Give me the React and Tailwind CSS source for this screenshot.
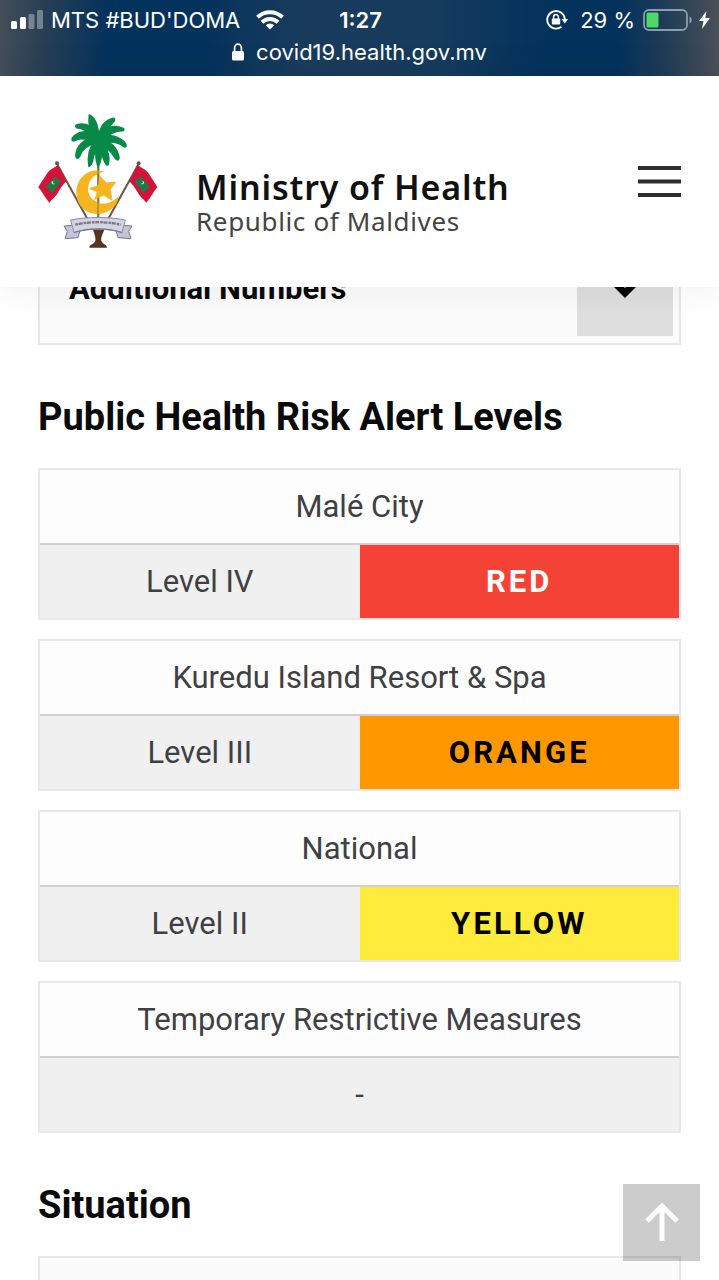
import React from 'react';

const alertLevels = [
  { area: 'Malé City', level: 'Level IV', color: 'RED', badge: 'bg-[#f44336] text-white' },
  { area: 'Kuredu Island Resort & Spa', level: 'Level III', color: 'ORANGE', badge: 'bg-[#ff9800] text-black' },
  { area: 'National', level: 'Level II', color: 'YELLOW', badge: 'bg-[#ffeb3b] text-black' },
  { area: 'Temporary Restrictive Measures', level: '-' },
];

const StatusBar = () => (
  <div className="shrink-0 h-[76px] pt-1 font-['Inter',sans-serif] text-white bg-[linear-gradient(90deg,#434e58_0%,#283f55_6%,#03325c_15%,#03325c_28%,#193c5d_42%,#163b5d_60%,#03325c_76%,#03325c_86%,#1d3b57_92%,#4a5057_100%)]">
    <div className="grid grid-cols-[1fr_auto_1fr] items-center h-8 pl-[11px] pr-[9px] text-[22px] leading-8">
      <div className="flex items-center">
        <svg width="32" height="20" viewBox="0 0 32 20" fill="#fff" aria-hidden="true">
          <rect x="0" y="11" width="6" height="8" rx="1.5" />
          <rect x="9" y="7" width="6" height="12" rx="1.5" />
          <rect x="17.500" y="4" width="6" height="15" rx="1.5" opacity=".35" />
          <rect x="26" y="0" width="6" height="19" rx="1.5" opacity=".35" />
        </svg>
        <span className="ml-2 whitespace-nowrap">MTS #BUD'DOMA</span>
        <svg className="ml-4" width="28" height="20" viewBox="0 0 28 20" fill="none" stroke="#fff" strokeWidth="4" aria-hidden="true">
          <path d="M1.500 7.200a18 18 0 0 1 25 0" />
          <path d="M6 12.200a11.500 11.500 0 0 1 16 0" />
          <path d="M14 19.600l-4.300-4.400a6.200 6.200 0 0 1 8.600 0z" fill="#fff" stroke="none" />
        </svg>
      </div>
      <span className="font-semibold">1:27</span>
      <div className="flex items-center justify-end">
        <svg width="22" height="20" viewBox="0 0 22 20" aria-hidden="true">
          <path d="M15.500 16.700A8.800 8.800 0 1 1 18.800 9" fill="none" stroke="#fff" strokeWidth="1.900" />
          <path d="M15.500 9h6.500l-3.200 4.500z" fill="#fff" />
          <rect x="5.800" y="8.600" width="8.400" height="6" rx="1" fill="#fff" />
          <path d="M7.600 9V7a2.400 2.400 0 0 1 4.800 0v2" fill="none" stroke="#fff" strokeWidth="1.500" />
        </svg>
        <span className="ml-3 whitespace-nowrap">29 %</span>
        <svg className="ml-2" width="50" height="22" viewBox="0 0 50 22" aria-hidden="true">
          <rect x="1" y="1" width="43" height="20" rx="5" fill="none" stroke="#8a9cae" strokeWidth="1.800" />
          <path d="M46.500 7.500c3 1 3 6 0 7z" fill="#8a9cae" />
          <rect x="3.500" y="3.500" width="12" height="15" rx="1.500" fill="#4cd964" />
        </svg>
        <svg className="ml-1.5" width="11" height="18" viewBox="0 0 11 18" fill="#fff" aria-hidden="true">
          <path d="M7.500 0L0 10h4.500L3 18l8-11H6.300z" />
        </svg>
      </div>
    </div>
    <div className="flex items-center justify-center gap-3 h-8 text-[22px] leading-8">
      <svg width="12" height="18" viewBox="0 0 12 18" aria-hidden="true">
        <rect y="8" width="12" height="9.500" rx="1.500" fill="#fff" />
        <path d="M2.600 9V5a3.400 3.900 0 0 1 6.800 0v4" fill="none" stroke="#fff" strokeWidth="1.700" />
      </svg>
      <span>covid19.health.gov.mv</span>
    </div>
  </div>
);

const Flag = () => (
  <g>
    <path d="M80 190L172 356" stroke="#6b5548" strokeWidth="6" />
    <circle cx="81" cy="190" r="6" fill="#6b5548" />
    <path d="M84 194C72 206 60 205 50 222C40 238 32 248 25 262C36 274 44 292 58 308C68 296 78 290 86 274C94 260 100 254 109 244Z" fill="#d2143a" />
    <path d="M74 230L93 244C86 256 76 262 69 280L48 262C56 248 66 242 74 230Z" fill="#1c7c45" />
    <path d="M71 243a5 5 0 1 0 3 8a4 4 0 0 1-3-8z" fill="#fff" />
  </g>
);

const Emblem = () => (
  <svg className="shrink-0" width="120" height="136" viewBox="24 39 360 408" role="img" aria-label="Maldives emblem">
    <path d="M205 130V390" stroke="#6f5a3c" strokeWidth="6" />
    {/* palm */}
    <g fill="#078a48" stroke="#078a48" strokeWidth="5" strokeLinejoin="round">
      <path d="M204 108C206 82 198 56 178 45C176 62 178 88 190 108Z" />
      <path d="M198 100C184 76 164 68 139 75C136 78 138 82 142 84C158 82 174 96 188 116Z" />
      <path d="M196 104C172 90 142 94 127 115C125 121 128 123 132 122C150 112 172 116 192 126Z" />
      <path d="M194 112C164 116 136 138 138 170C140 176 145 176 148 170C154 150 172 134 198 130Z" />
      <path d="M196 120C180 140 172 170 177 199C184 196 188 184 190 170C194 152 204 142 208 128Z" />
      <path d="M204 120C196 144 196 176 204 200C212 188 216 160 216 128Z" />
      <path d="M208 108C210 82 222 62 250 55C256 56 254 60 250 66C238 78 230 94 220 112Z" />
      <path d="M208 104C226 82 252 74 278 85C284 88 282 92 276 92C256 92 240 100 222 118Z" />
      <path d="M208 110C236 102 270 108 287 132C290 140 286 143 280 138C264 126 242 124 218 128Z" />
      <path d="M210 116C240 124 262 144 267 174C266 181 262 181 257 176C246 156 232 142 208 132Z" />
      <path d="M212 122C230 140 240 166 235 193C230 198 226 190 222 180C216 160 208 146 202 130Z" />
      <ellipse cx="206" cy="118" rx="28" ry="24" />
    </g>
    <Flag />
    <g transform="matrix(-1 0 0 1 407 0)">
      <Flag />
    </g>
    {/* crescent and star */}
    <path d="M222 215C176 200 139 234 139 277C139 318 168 342 202 342C238 342 264 318 267 286C248 312 216 318 194 302C160 280 170 226 222 215Z" fill="#f5b51f" />
    <path d="M204 210V355" stroke="#a9822c" strokeWidth="4" />
    <path d="M178 266L206 256L209 228L229 248L258 246L241 268L246 301L220 285L194 299L202 275Z" fill="#f5b51f" stroke="#f5b51f" strokeWidth="2" />
    {/* base and scroll */}
    <path d="M188 386C194 404 198 414 196 422C194 432 178 432 178 443H231C231 432 216 432 214 422C212 412 218 402 224 386Z" fill="#563521" />
    <path d="M132 376L102 378L112 394L105 416L144 413L150 392ZM276 376L306 378L296 394L303 416L264 413L258 392Z" fill="#c4c4d6" stroke="#77778e" strokeWidth="3" />
    <path d="M122 360C170 350 236 350 286 360L276 398C236 384 172 384 132 398Z" fill="#d3d3e2" stroke="#8c8ca6" strokeWidth="3" />
    <path d="M136 374C184 364 226 364 272 374" fill="none" stroke="#77778e" strokeWidth="7" strokeDasharray="8 2 12 3" />
    <path d="M132 398C172 383 236 383 276 398" fill="none" stroke="#77778e" strokeWidth="4" />
  </svg>
);

const Header = () => (
  <header className="relative z-10 shrink-0 flex items-center justify-between px-[38px] pt-[37px] pb-[38px] bg-white shadow-[0_0_40px_rgba(0,0,0,0.07)]">
    <a href="#home" className="flex items-center gap-[38px]">
      <Emblem />
      <span className="flex flex-col pt-10 font-['Noto_Sans',sans-serif] whitespace-nowrap">
        <span className="text-[34px] leading-10 font-semibold tracking-wide text-[#111]">Ministry of Health</span>
        <span className="text-[26px] leading-7 tracking-wide text-[#444]">Republic of Maldives</span>
      </span>
    </a>
    <button type="button" aria-label="Menu">
      <svg width="43" height="31" viewBox="0 0 43 31" stroke="#2e2e2e" strokeWidth="3.800">
        <path d="M0 2H43M0 15.500H43M0 29H43" />
      </svg>
    </button>
  </header>
);

const AlertTable = ({ item }) => (
  <table className="w-full table-fixed border-separate border-spacing-0 border-2 border-[#e8e8e8] text-center text-[31px] leading-[37px] text-[#3f4044]">
    <thead>
      <tr>
        <th colSpan={2} className="py-[18px] px-4 font-normal bg-[#fdfdfd] border-b-2 border-[#d0d0d2]">
          {item.area}
        </th>
      </tr>
    </thead>
    <tbody>
      <tr>
        <td colSpan={item.color ? 1 : 2} className="py-[18px] bg-[#f0f0f0]">{item.level}</td>
        {item.color && (
          <td className={`py-[18px] font-bold tracking-widest ${item.badge}`}>{item.color}</td>
        )}
      </tr>
    </tbody>
  </table>
);

const App = () => {
  return (
    <div className="h-screen flex flex-col overflow-hidden bg-white font-['Roboto',sans-serif]">
      <StatusBar />
      <Header />

      {/* content is scrolled under the header */}
      <main className="-mt-14 px-[38px] flex-1 overflow-hidden">
        <section className="flex items-center justify-between py-[7px] pr-1.5 pl-[29px] border-2 border-[#e8e8e8] bg-[#fbfbfb]">
          <h3 className="text-[31px] leading-[37px] font-bold text-[#0a0a0a]">Additional Numbers</h3>
          <button type="button" aria-label="Expand" className="flex items-center justify-center size-24 bg-[#dedede]">
            <svg width="40" height="24" viewBox="0 0 40 24" fill="none" stroke="#000" strokeWidth="7">
              <path d="M5 2L20 17L35 2" />
            </svg>
          </button>
        </section>

        <h2 className="mt-12 mb-[27px] text-[38px] leading-[48px] font-bold text-[#0a0a0a]">
          Public Health Risk Alert Levels
        </h2>
        <div className="flex flex-col gap-[19px]">
          {alertLevels.map(item => (
            <AlertTable key={item.area} item={item} />
          ))}
        </div>

        <h2 className="mt-12 mb-[27px] text-[38px] leading-[48px] font-bold text-[#0a0a0a]">Situation</h2>
        <section className="h-24 border-2 border-[#e8e8e8] bg-[#fbfbfb]" />
      </main>

      <button
        type="button"
        aria-label="Back to top"
        className="fixed right-[19px] bottom-[19px] z-20 flex items-center justify-center size-[77px] bg-black/20"
      >
        <svg width="34" height="40" viewBox="0 0 34 40" fill="none" stroke="#fff" strokeWidth="5">
          <path d="M17 38V4M2 18L17 3L32 18" />
        </svg>
      </button>
    </div>
  );
};

export default App;
